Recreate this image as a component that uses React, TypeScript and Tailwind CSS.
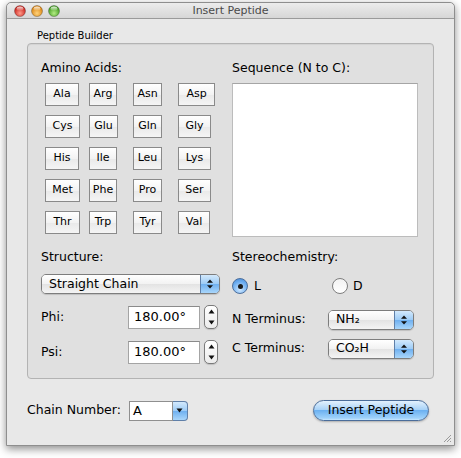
import React from "react";

const font = "font-['DejaVu_Sans',sans-serif]";

const aminoRows = [
  [
    { n: "Ala", w: "w-[34px]" },
    { n: "Arg", w: "w-[28px]" },
    { n: "Asn", w: "w-[29px]" },
    { n: "Asp", w: "w-[37px]" },
  ],
  [
    { n: "Cys", w: "w-[35px]" },
    { n: "Glu", w: "w-[29px]" },
    { n: "Gln", w: "w-[29px]" },
    { n: "Gly", w: "w-[33px]" },
  ],
  [
    { n: "His", w: "w-[34px]" },
    { n: "Ile", w: "w-[28px]" },
    { n: "Leu", w: "w-[29px]" },
    { n: "Lys", w: "w-[33px]" },
  ],
  [
    { n: "Met", w: "w-[35px]" },
    { n: "Phe", w: "w-[28px]" },
    { n: "Pro", w: "w-[29px]" },
    { n: "Ser", w: "w-[33px]" },
  ],
  [
    { n: "Thr", w: "w-[35px]" },
    { n: "Trp", w: "w-[28px]" },
    { n: "Tyr", w: "w-[29px]" },
    { n: "Val", w: "w-[32px]" },
  ],
];

function Light({ c1, c2, id }: { c1: string; c2: string; id: string }) {
  return (
    <svg width="12" height="12" viewBox="0 0 12 12">
      <defs>
        <radialGradient id={id} cx="50%" cy="70%" r="60%">
          <stop offset="0%" stopColor={c1} />
          <stop offset="100%" stopColor={c2} />
        </radialGradient>
        <linearGradient id={id + "g"} x1="0" y1="0" x2="0" y2="1">
          <stop offset="0%" stopColor="#fff" stopOpacity="0.9" />
          <stop offset="100%" stopColor="#fff" stopOpacity="0" />
        </linearGradient>
      </defs>
      <circle cx="6" cy="6" r="5.5" fill={`url(#${id})`} stroke="rgba(0,0,0,0.35)" strokeWidth="0.7" />
      <ellipse cx="6" cy="3.6" rx="3.4" ry="2.2" fill={`url(#${id}g)`} />
    </svg>
  );
}

function UpDown() {
  return (
    <svg width="8" height="12" viewBox="0 0 8 12">
      <path d="M4 1.5 L7 4.8 H1 Z" fill="#111" />
      <path d="M4 10.5 L7 7.2 H1 Z" fill="#111" />
    </svg>
  );
}

function Popup({ label, w }: { label: React.ReactNode; w: string }) {
  return (
    <div
      className={`${w} flex h-[20px] overflow-hidden rounded-[5px] border border-[#7d7d7d] shadow-[0_1px_1px_rgba(0,0,0,0.15)]`}
    >
      <div className="flex flex-1 items-center bg-[linear-gradient(#ffffff,#f2f2f2_50%,#e3e3e3_51%,#f4f4f4)] pl-[7px] text-[12.5px] text-black">
        {label}
      </div>
      <div className="flex w-[19px] items-center justify-center border-l border-[#5f7fa8] bg-[linear-gradient(#d3e9fc,#9ccbf6_50%,#6fb0f0_51%,#a9d6fb)]">
        <UpDown />
      </div>
    </div>
  );
}

function Stepper() {
  return (
    <div className="flex h-[24px] w-[14px] flex-col items-center justify-between rounded-[5px] border border-[#7a7a7a] bg-[linear-gradient(#ffffff,#ececec)] py-[3px] shadow-[0_1px_1px_rgba(0,0,0,0.15)]">
      <svg width="7" height="5" viewBox="0 0 7 5">
        <path d="M3.5 0.5 L6.5 4.5 H0.5 Z" fill="#111" />
      </svg>
      <svg width="7" height="5" viewBox="0 0 7 5">
        <path d="M3.5 4.5 L6.5 0.5 H0.5 Z" fill="#111" />
      </svg>
    </div>
  );
}

function AngleRow({ label }: { label: string }) {
  return (
    <div className="flex items-center">
      <span className="w-[87px] text-[12.5px] text-black">{label}</span>
      <div className="flex h-[23px] w-[72px] items-center border border-[#a4a4a4] border-t-[#8a8a8a] bg-white pl-[5px] text-[13px] text-black">
        180.00°
      </div>
      <div className="ml-[4px]">
        <Stepper />
      </div>
    </div>
  );
}

export default function App() {
  return (
    <div className={`${font} min-h-screen bg-white pl-[6px] pt-[2px]`}>
      <div className="relative flex h-[444px] w-[449px] flex-col rounded-t-[5px] border border-[#8e8e8e] bg-[#e8e8e8] shadow-[0_3px_8px_rgba(0,0,0,0.45)]">
        {/* title bar */}
        <div className="grid h-[16px] grid-cols-[60px_1fr_60px] items-center rounded-t-[5px] border-b border-[#9a9a9a] bg-[linear-gradient(#ececec,#d6d6d6)]">
          <div className="flex items-center gap-[5px] pl-[7px]">
            <Light id="r" c1="#ff9a8a" c2="#c8201a" />
            <Light id="o" c1="#ffd27a" c2="#d9820f" />
            <Light id="g" c1="#b4ec84" c2="#3f9a1e" />
          </div>
          <div className="text-center text-[11px] leading-none text-[#4a4a4a]">Insert Peptide</div>
          <div />
        </div>

        {/* body */}
        <div className="px-[20px] pt-[11px]">
          <div className="ml-[10px] text-[10px] leading-[12px] text-black">Peptide Builder</div>
          <div className="mt-[1px] flex h-[336px] rounded-[4px] border border-[#b3b3b3] bg-[#e0e0e0] pl-[13px] pt-[16px] shadow-[inset_0_1px_1px_rgba(0,0,0,0.06)]">
            {/* left column */}
            <div className="flex w-[191px] flex-col">
              <div className="text-[12.5px] leading-[16px] text-black">Amino Acids:</div>
              <div className="ml-[4px] mt-[7px] grid grid-cols-[44px_44px_45px_40px] gap-y-[9px]">
                {aminoRows.flat().map((a) => (
                  <div
                    key={a.n}
                    className={`${a.w} flex h-[23px] items-center justify-center border border-[#8a8a8a] bg-[linear-gradient(#ffffff,#f3f3f3_50%,#e9e9e9_51%,#f5f5f5)] text-[11px] text-black`}
                  >
                    {a.n}
                  </div>
                ))}
              </div>
              <div className="mt-[15px] text-[12.5px] leading-[16px] text-black">Structure:</div>
              <div className="mt-[9px]">
                <Popup label="Straight Chain" w="w-[179px]" />
              </div>
              <div className="mt-[11px]">
                <AngleRow label="Phi:" />
              </div>
              <div className="mt-[11px]">
                <AngleRow label="Psi:" />
              </div>
            </div>

            {/* right column */}
            <div className="flex flex-col">
              <div className="text-[12.5px] leading-[16px] text-black">Sequence (N to C):</div>
              <div className="mt-[7px] h-[154px] w-[186px] border border-[#bcbcbc] border-t-[#a5a5a5] bg-white" />
              <div className="mt-[12px] text-[12.5px] leading-[16px] text-black">Stereochemistry:</div>
              <div className="mt-[12px] flex items-center">
                <div className="flex items-center">
                  <div className="flex h-[16px] w-[16px] items-center justify-center rounded-full border border-[#4d6f9c] bg-[radial-gradient(circle_at_50%_75%,#cfe8ff,#6eaef0_60%,#3f86d6)]">
                    <div className="h-[5px] w-[5px] rounded-full bg-[#1a1a1a]" />
                  </div>
                  <span className="ml-[6px] text-[12.5px] text-black">L</span>
                </div>
                <div className="ml-[71px] flex items-center">
                  <div className="h-[16px] w-[16px] rounded-full border border-[#7e7e7e] bg-[linear-gradient(#f2f2f2,#ffffff)]" />
                  <span className="ml-[5px] text-[12.5px] text-black">D</span>
                </div>
              </div>
              <div className="mt-[14px] flex items-center">
                <span className="w-[96px] text-[12.5px] text-black">N Terminus:</span>
                <Popup label="NH₂" w="w-[86px]" />
              </div>
              <div className="mt-[9px] flex items-center">
                <span className="w-[96px] text-[12.5px] text-black">C Terminus:</span>
                <Popup label="CO₂H" w="w-[86px]" />
              </div>
            </div>
          </div>

          {/* bottom row */}
          <div className="mt-[21px] flex items-center justify-between pr-[5px]">
            <div className="flex items-center">
              <span className="text-[12.5px] text-black">Chain Number:</span>
              <div className="ml-[8px] flex h-[20px] w-[59px]">
                <div className="flex flex-1 items-center border border-[#8f8f8f] bg-white pl-[3px] text-[13px] text-black">
                  A
                </div>
                <div className="flex w-[15px] items-center justify-center rounded-r-[4px] border border-l-0 border-[#5f7fa8] bg-[linear-gradient(#d3e9fc,#9ccbf6_50%,#6fb0f0_51%,#a9d6fb)]">
                  <svg width="7" height="5" viewBox="0 0 7 5">
                    <path d="M3.5 4.5 L6.5 0.5 H0.5 Z" fill="#111" />
                  </svg>
                </div>
              </div>
            </div>
            <div className="flex h-[21px] w-[116px] items-center justify-center rounded-full border border-[#4b6d9a] bg-[linear-gradient(#e3f1fd,#a9d3f8_45%,#6cb1f1_50%,#9fd2fb_90%,#c9e8ff)] text-[12.5px] text-black shadow-[0_1px_2px_rgba(0,0,0,0.25)]">
              Insert Peptide
            </div>
          </div>
        </div>

        {/* resize grip */}
        <svg className="absolute bottom-[2px] right-[2px]" width="10" height="10" viewBox="0 0 10 10">
          <path d="M9 2 L2 9 M9 5 L5 9 M9 8 L8 9" stroke="#9a9a9a" strokeWidth="1" />
        </svg>
      </div>
    </div>
  );
}
